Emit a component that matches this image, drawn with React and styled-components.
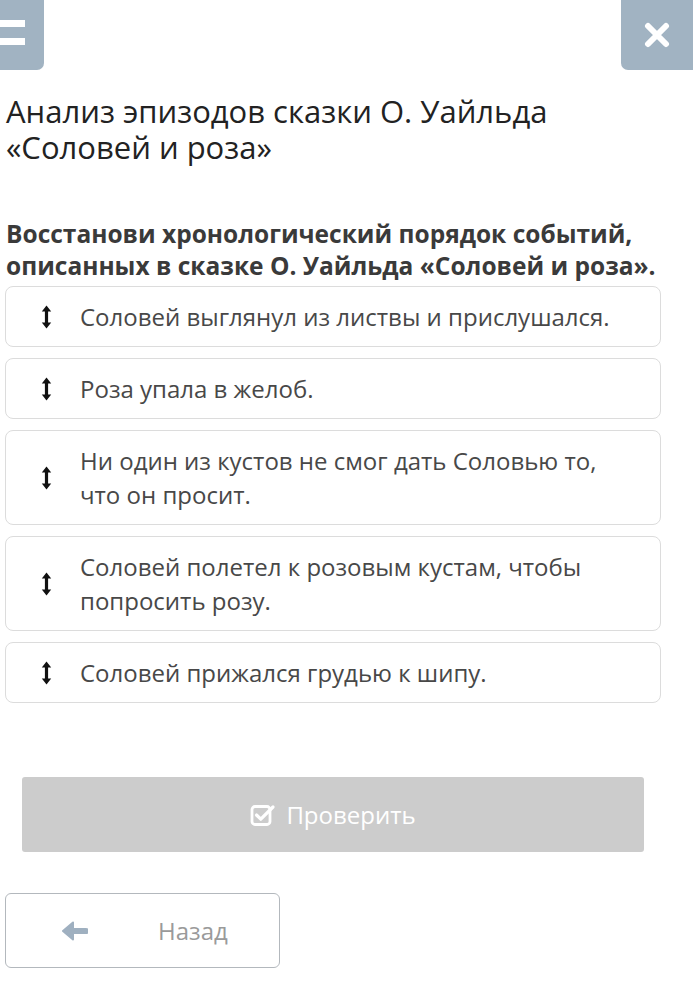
import React from "react";
import styled, { createGlobalStyle } from "styled-components";

const Global = createGlobalStyle`
  html, body { margin: 0; padding: 0; background: #fff; }
  body { font-family: "Open Sans", "Noto Sans", sans-serif; overflow: hidden; }
`;

const Page = styled.div`
  width: 693px;
  height: 1008px;
  overflow: hidden;
  position: relative;
`;

const Header = styled.div`
  display: flex;
  justify-content: space-between;
  align-items: flex-end;
  height: 70px;
`;

const HeadButton = styled.div`
  width: ${(p) => p.$w}px;
  height: 90px;
  margin-top: -20px;
  margin-left: ${(p) => p.$ml || 0}px;
  margin-right: ${(p) => p.$mr || 0}px;
  background: #a1b3c2;
  border-radius: 7px;
  display: flex;
  align-items: ${(p) => p.$align || "center"};
  justify-content: ${(p) => p.$justify || "center"};
  padding-top: 20px;
  box-sizing: border-box;
`;

const Title = styled.h1`
  margin: 23px 0 0 6px;
  font-size: 31px;
  line-height: 36px;
  font-weight: 400;
  color: #222;
`;

const Task = styled.p`
  margin: 53px 0 0 6px;
  font-size: 24.5px;
  line-height: 32px;
  font-weight: 700;
  color: #3a3a3a;
`;

const List = styled.div`
  margin: 4px 32px 0 5px;
  display: flex;
  flex-direction: column;
  gap: 11px;
`;

const Card = styled.div`
  display: grid;
  grid-template-columns: 24px 1fr;
  column-gap: 22px;
  align-items: center;
  border: 1px solid #dcdcdc;
  border-radius: 8px;
  padding: 12.5px 40px 12.5px 28px;
  font-size: 24px;
  line-height: 34px;
  color: #484848;
  background: #fff;
`;

const IconCell = styled.div`
  display: flex;
  justify-content: center;
  align-items: center;
`;

const CheckButton = styled.div`
  margin: 74px 49px 0 22px;
  height: 75px;
  background: #cccccc;
  border-radius: 3px;
  display: flex;
  align-items: center;
  justify-content: center;
  gap: 10px;
  color: #fff;
  font-size: 24px;
`;

const BackButton = styled.div`
  margin: 41px 0 0 5px;
  width: 275px;
  height: 75px;
  box-sizing: border-box;
  border: 1.5px solid #b3b8bd;
  border-radius: 6px;
  display: grid;
  grid-template-columns: 130px 1fr;
  align-items: center;
  font-size: 24px;
  color: #9a9a9a;
`;

const BackArrow = styled.div`
  display: flex;
  justify-content: flex-end;
  padding-right: 48px;
  box-sizing: border-box;
`;

const BackLabel = styled.span`
  padding-left: 22px;
`;

const DragIcon = () => (
  <svg width="11" height="24" viewBox="0 0 11 24">
    <path d="M5.5 3 L5.5 21" stroke="#111" strokeWidth="3.2" />
    <path d="M0.8 6.5 L5.5 0.5 L10.2 6.5 Z" fill="#111" />
    <path d="M0.8 17.5 L5.5 23.5 L10.2 17.5 Z" fill="#111" />
  </svg>
);

const items = [
  "Соловей выглянул из листвы и прислушался.",
  "Роза упала в желоб.",
  "Ни один из кустов не смог дать Соловью то, что он просит.",
  "Соловей полетел к розовым кустам, чтобы попросить розу.",
  "Соловей прижался грудью к шипу.",
];

export default function App() {
  return (
    <Page>
      <Global />
      <Header>
        <HeadButton $w={60} $ml={-16} $justify="flex-start" $align="flex-start">
          <svg width="42" height="50" viewBox="0 0 42 50">
            <rect x="0" y="20" width="41" height="7" fill="#fff" />
            <rect x="0" y="38" width="41" height="7" fill="#fff" />
          </svg>
        </HeadButton>
        <HeadButton $w={78} $mr={-6}>
          <svg width="26" height="26" viewBox="0 0 26 26" style={{ marginRight: 6 }}>
            <path d="M4 4 L22 22 M22 4 L4 22" stroke="#fff" strokeWidth="6" strokeLinecap="round" />
          </svg>
        </HeadButton>
      </Header>
      <Title>
        Анализ эпизодов сказки О. Уайльда
        <br />
        «Соловей и роза»
      </Title>
      <Task>
        Восстанови хронологический порядок событий,
        <br />
        описанных в сказке О. Уайльда «Соловей и роза».
      </Task>
      <List>
        {items.map((t) => (
          <Card key={t}>
            <IconCell>
              <DragIcon />
            </IconCell>
            <span>{t}</span>
          </Card>
        ))}
      </List>
      <CheckButton>
        <svg width="26" height="24" viewBox="0 0 26 24">
          <rect x="2" y="3.5" width="18" height="18" rx="3" fill="none" stroke="#fff" strokeWidth="2.8" />
          <path d="M6.5 12 L10.8 16.2 L23 4" fill="none" stroke="#fff" strokeWidth="3.2" strokeLinecap="round" strokeLinejoin="round" />
        </svg>
        <span>Проверить</span>
      </CheckButton>
      <BackButton>
        <BackArrow>
          <svg width="26" height="20" viewBox="0 0 26 20">
            <path d="M24 10 L8 10" stroke="#9fb0c0" strokeWidth="6" strokeLinecap="round" />
            <path d="M1 10 L11 1.5 L11 18.5 Z" fill="#9fb0c0" stroke="#9fb0c0" strokeWidth="2" strokeLinejoin="round" />
          </svg>
        </BackArrow>
        <BackLabel>Назад</BackLabel>
      </BackButton>
    </Page>
  );
}
